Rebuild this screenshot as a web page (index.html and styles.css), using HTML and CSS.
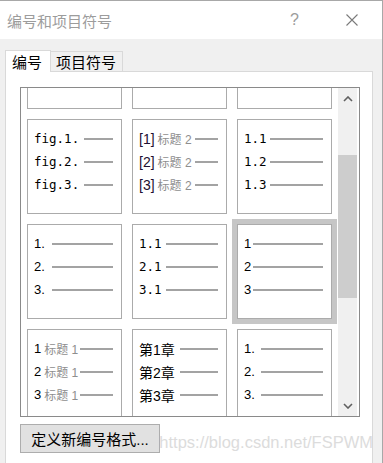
FILE: index.html
```html
<!DOCTYPE html>
<html>
 <head>
  <meta charset="utf-8">
  <title>编号和项目符号</title>
  <meta name="viewport" content="width=device-width, initial-scale=1.0">
<link rel="stylesheet" href="styles.css">
 </head>

<body>

<div class="window">

  <header class="titlebar">
    <span class="title">编号和项目符号</span>
    <span class="help">?</span>
    <svg class="close" width="12" height="12" viewBox="0 0 12 12">
      <path d="M0.5 0.5 L11.5 11.5 M11.5 0.5 L0.5 11.5" stroke="#7a7a7a" stroke-width="1.1" fill="none"/>
    </svg>
  </header>

  <div class="tabs">
    <div class="tab active">编号</div>
    <div class="tab">项目符号</div>
  </div>

  <section class="panel">

    <div class="listbox">
      <div class="viewport">
        <div class="grid">
          <!-- first row is scrolled almost out of view -->
          <div class="cell"></div>
          <div class="cell"></div>
          <div class="cell"></div>

          <div class="cell">
            <div class="item"><span class="mono">fig.1.</span><span class="rule g5"></span></div>
            <div class="item"><span class="mono">fig.2.</span><span class="rule g5"></span></div>
            <div class="item"><span class="mono">fig.3.</span><span class="rule g5"></span></div>
          </div>
          <div class="cell">
            <div class="item"><span class="num big">[1]</span><span class="lbl">标题 2</span><span class="rule g3"></span></div>
            <div class="item"><span class="num big">[2]</span><span class="lbl">标题 2</span><span class="rule g3"></span></div>
            <div class="item"><span class="num big">[3]</span><span class="lbl">标题 2</span><span class="rule g3"></span></div>
          </div>
          <div class="cell">
            <div class="item"><span class="mono">1.1</span><span class="rule g3"></span></div>
            <div class="item"><span class="mono">1.2</span><span class="rule g3"></span></div>
            <div class="item"><span class="mono">1.3</span><span class="rule g3"></span></div>
          </div>

          <div class="cell">
            <div class="item"><span class="num">1.</span><span class="rule g7"></span></div>
            <div class="item"><span class="num">2.</span><span class="rule g7"></span></div>
            <div class="item"><span class="num">3.</span><span class="rule g7"></span></div>
          </div>
          <div class="cell">
            <div class="item"><span class="mono">1.1</span><span class="rule g4"></span></div>
            <div class="item"><span class="mono">2.1</span><span class="rule g4"></span></div>
            <div class="item"><span class="mono">3.1</span><span class="rule g4"></span></div>
          </div>
          <div class="cell selected">
            <div class="item"><span class="num">1</span><span class="rule g2"></span></div>
            <div class="item"><span class="num">2</span><span class="rule g2"></span></div>
            <div class="item"><span class="num">3</span><span class="rule g2"></span></div>
          </div>

          <div class="cell">
            <div class="item"><span class="num">1</span><span class="lbl">标题 1</span><span class="rule g2"></span></div>
            <div class="item"><span class="num">2</span><span class="lbl">标题 1</span><span class="rule g2"></span></div>
            <div class="item"><span class="num">3</span><span class="lbl">标题 1</span><span class="rule g2"></span></div>
          </div>
          <div class="cell">
            <div class="item"><span class="chap">第1章</span><span class="rule g5"></span></div>
            <div class="item"><span class="chap">第2章</span><span class="rule g5"></span></div>
            <div class="item"><span class="chap">第3章</span><span class="rule g5"></span></div>
          </div>
          <div class="cell">
            <div class="item"><span class="num">1.</span><span class="rule g6"></span></div>
            <div class="item"><span class="num">2.</span><span class="rule g6"></span></div>
            <div class="item"><span class="num">3.</span><span class="rule g6"></span></div>
          </div>
        </div>
      </div>

      <div class="scrollbar">
        <div class="sb-btn">
          <svg width="10" height="6" viewBox="0 0 10 6"><path d="M1 5 L5 1 L9 5" stroke="#606060" stroke-width="1.6" fill="none"/></svg>
        </div>
        <div class="sb-track"><div class="sb-thumb"></div></div>
        <div class="sb-btn">
          <svg width="10" height="6" viewBox="0 0 10 6"><path d="M1 1 L5 5 L9 1" stroke="#606060" stroke-width="1.6" fill="none"/></svg>
        </div>
      </div>
    </div>

    <div class="actions">
      <button type="button" class="btn">定义新编号格式...</button>
    </div>

  </section>

  <div class="watermark">https://blog.csdn.net/FSPWM</div>

</div>

</body>
</html>
```

FILE: styles.css
```css
* {
  box-sizing: border-box;
}

body {
  margin: 0;
  font-family: "Liberation Sans", "Noto Sans CJK SC", sans-serif;
}

.window {
  position: relative;
  width: 383px;
  height: 463px;
  overflow: hidden;
  background: #f0f0f0;
  border-top: 1px solid #a8a8a8;
  border-right: 1px solid #a8a8a8;
}

/* title bar */
.titlebar {
  display: flex;
  align-items: center;
  height: 38px;
  padding-left: 7px;
  background: #fff;
}

.title {
  font-family: "Noto Sans CJK SC", sans-serif;
  font-size: 15px;
  color: #9c9c9c;
}

.help {
  margin-left: auto;
  margin-right: 47px;
  font-size: 16px;
  color: #9c9c9c;
}

.close {
  margin-right: 24px;
}

/* tabs */
.tabs {
  display: flex;
  align-items: flex-end;
  margin-top: 11px;
  padding-left: 5px;
}

.tab {
  height: 21px;
  padding: 0 6px 0 5px;
  margin-left: -1px;
  border: 1px solid #d9d9d9;
  border-bottom: none;
  font-family: "Noto Sans CJK SC", sans-serif;
  font-size: 15px;
  line-height: 20px;
  color: #000;
  background: #f0f0f0;
}

.tab.active {
  position: relative;
  z-index: 2;
  height: 22px;
  margin-left: 0;
  padding: 0 8px 0 6px;
  line-height: 21px;
  background: #fff;
}

/* panel */
.panel {
  position: relative;
  z-index: 1;
  width: 368px;
  height: 400px;
  margin: -1px 0 0 5px;
  border: 1px solid #d9d9d9;
  background: #fff;
}

.listbox {
  display: flex;
  width: 340px;
  height: 330px;
  margin: 15px 0 0 14px;
  border: 1px solid #8a8a8a;
  background: #fff;
}

.viewport {
  flex: 1;
  overflow: hidden;
  padding-left: 6px;
}

.grid {
  display: grid;
  grid-template-columns: repeat(3, 95px);
  grid-auto-rows: 95px;
  gap: 10px;
  margin-top: -74px;
}

.cell {
  display: flex;
  flex-direction: column;
  padding: 7px 8px 0 6px;
  border: 1px solid #ababab;
}

.cell.selected {
  outline: 5px solid #c6c6c6;
}

.item {
  display: flex;
  align-items: center;
  height: 23px;
  white-space: nowrap;
  color: #000;
}

.mono {
  font-family: "DejaVu Sans Mono", monospace;
  font-size: 12.5px;
}

.num {
  font-size: 13px;
}

.num.big {
  font-size: 14px;
  color: #1e1030;
}

.chap {
  font-family: "Liberation Sans", "Noto Sans CJK SC", sans-serif;
  font-size: 14px;
}

.lbl {
  margin-left: 3px;
  font-family: "Liberation Sans", "Noto Sans CJK SC", sans-serif;
  font-size: 12px;
  color: #8e8e8e;
}

.rule {
  flex: 1;
  height: 2px;
  background: #a3a3a3;
}

.g2 { margin-left: 2px; }
.g3 { margin-left: 3px; }
.g4 { margin-left: 4px; }
.g5 { margin-left: 5px; }
.g6 { margin-left: 6px; }
.g7 { margin-left: 7px; }

/* scrollbar */
.scrollbar {
  display: flex;
  flex-direction: column;
  width: 19px;
  margin-right: 2px;
  background: #f0f0f0;
}

.sb-btn {
  display: flex;
  align-items: center;
  justify-content: center;
  height: 21px;
}

.sb-track {
  flex: 1;
  padding-top: 46px;
}

.sb-thumb {
  height: 143px;
  background: #cdcdcd;
}

/* bottom button */
.actions {
  margin: 7px 0 0 14px;
}

.btn {
  width: 140px;
  height: 29px;
  padding: 0;
  border: 1px solid #adadad;
  background: #e1e1e1;
  font-family: "Liberation Sans", "Noto Sans CJK SC", sans-serif;
  font-size: 15px;
  color: #000;
}

.watermark {
  position: absolute;
  z-index: 3;
  right: 9px;
  top: 432px;
  font-size: 16.5px;
  color: #dcdcdc;
}
```
